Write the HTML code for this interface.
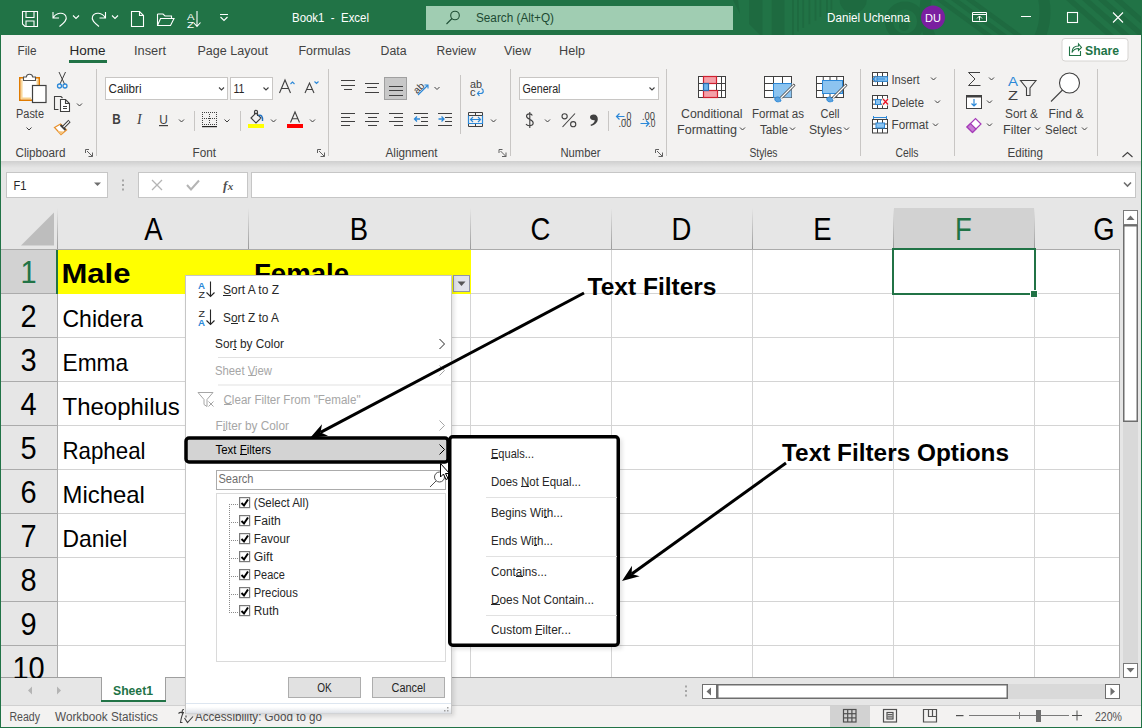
<!DOCTYPE html>
<html><head><meta charset="utf-8"><style>
html,body{margin:0;padding:0;width:1142px;height:728px;overflow:hidden;background:#E6E6E6}
svg{display:block;font-family:"Liberation Sans",sans-serif}
</style></head><body>
<svg width="1142" height="728" viewBox="0 0 1142 728">
<rect x="0" y="0" width="1142" height="728" fill="#E6E6E6" /><rect x="0" y="0" width="1142" height="35" fill="#217346" /><rect x="0" y="35" width="1142" height="126" fill="#F3F2F1" /><defs><linearGradient id="sh" x1="0" y1="0" x2="0" y2="1"><stop offset="0" stop-color="#CFCFCF"/><stop offset="1" stop-color="#E6E6E6"/></linearGradient><linearGradient id="vsep" x1="0" y1="0" x2="0" y2="1"><stop offset="0" stop-color="#E6E6E6"/><stop offset="1" stop-color="#9A9A9A"/></linearGradient><filter id="mshadow" x="-10%" y="-10%" width="130%" height="130%"><feGaussianBlur stdDeviation="2"/></filter></defs><rect x="0" y="161" width="1142" height="7" fill="url(#sh)" /><rect x="6.5" y="172.5" width="101" height="25" fill="#FFFFFF" stroke="#C6C6C6" stroke-width="1"/><text x="13.5" y="189.5" font-size="12.5" fill="#262626" textLength="13" lengthAdjust="spacingAndGlyphs" >F1</text><path d="M94,182.5 L101,182.5 L97.5,186 Z" stroke="none" fill="#6E6E6E" stroke-width="1" /><rect x="122" y="179.5" width="2" height="2" fill="#A6A6A6" /><rect x="122" y="184" width="2" height="2" fill="#A6A6A6" /><rect x="122" y="188.5" width="2" height="2" fill="#A6A6A6" /><rect x="138.5" y="172.5" width="109" height="25" fill="#FFFFFF" stroke="#C6C6C6" stroke-width="1"/><path d="M152,180 L162,190 M162,180 L152,190" stroke="#B4B4B4" fill="none" stroke-width="1.3" /><path d="M187,185 L191,189.5 L199,180.5" stroke="#B4B4B4" fill="none" stroke-width="2" /><text x="223" y="190" font-family="Liberation Serif" font-style="italic" font-weight="bold" font-size="13" fill="#505050">f<tspan font-size="11" dx="0.5">x</tspan></text><rect x="251.5" y="172.5" width="884" height="25" fill="#FFFFFF" stroke="#C6C6C6" stroke-width="1"/><path d="M1124,182.5 L1127.5,186 L1131,182.5" stroke="#6E6E6E" fill="none" stroke-width="1.6" /><rect x="893" y="208" width="141" height="41" fill="#D2D2D2" /><rect x="248" y="208" width="1" height="41" fill="url(#vsep)" /><rect x="470" y="208" width="1" height="41" fill="url(#vsep)" /><rect x="611" y="208" width="1" height="41" fill="url(#vsep)" /><rect x="752" y="208" width="1" height="41" fill="url(#vsep)" /><rect x="893" y="208" width="1" height="41" fill="url(#vsep)" /><rect x="1034" y="208" width="1" height="41" fill="url(#vsep)" /><rect x="57" y="208" width="1" height="41" fill="url(#vsep)" /><rect x="1" y="249" width="1119" height="1" fill="#ABABAB" /><path d="M54,212.5 L54,245.5 L21,245.5 Z" stroke="none" fill="#BDBDBD" stroke-width="1" /><text x="153.5" y="240" font-size="31" fill="#000000" textLength="18.34" lengthAdjust="spacingAndGlyphs" text-anchor="middle" >A</text><text x="359" y="240" font-size="31" fill="#000000" textLength="18.34" lengthAdjust="spacingAndGlyphs" text-anchor="middle" >B</text><text x="540.5" y="240" font-size="31" fill="#000000" textLength="19.86" lengthAdjust="spacingAndGlyphs" text-anchor="middle" >C</text><text x="681.5" y="240" font-size="31" fill="#000000" textLength="19.86" lengthAdjust="spacingAndGlyphs" text-anchor="middle" >D</text><text x="822.5" y="240" font-size="31" fill="#000000" textLength="18.34" lengthAdjust="spacingAndGlyphs" text-anchor="middle" >E</text><text x="963.5" y="240" font-size="31" fill="#217346" textLength="16.8" lengthAdjust="spacingAndGlyphs" text-anchor="middle" >F</text><text x="1104" y="240" font-size="31" fill="#000000" textLength="21.39" lengthAdjust="spacingAndGlyphs" text-anchor="middle" >G</text><rect x="58" y="250" width="1062" height="427" fill="#FFFFFF" /><rect x="1" y="250" width="56" height="44" fill="#D2D2D2" /><rect x="1" y="293" width="56" height="1" fill="#ABABAB" /><rect x="58" y="293" width="1062" height="1" fill="#D4D4D4" /><rect x="1" y="337" width="56" height="1" fill="#ABABAB" /><rect x="58" y="337" width="1062" height="1" fill="#D4D4D4" /><rect x="1" y="381" width="56" height="1" fill="#ABABAB" /><rect x="58" y="381" width="1062" height="1" fill="#D4D4D4" /><rect x="1" y="425" width="56" height="1" fill="#ABABAB" /><rect x="58" y="425" width="1062" height="1" fill="#D4D4D4" /><rect x="1" y="469" width="56" height="1" fill="#ABABAB" /><rect x="58" y="469" width="1062" height="1" fill="#D4D4D4" /><rect x="1" y="513" width="56" height="1" fill="#ABABAB" /><rect x="58" y="513" width="1062" height="1" fill="#D4D4D4" /><rect x="1" y="557" width="56" height="1" fill="#ABABAB" /><rect x="58" y="557" width="1062" height="1" fill="#D4D4D4" /><rect x="1" y="601" width="56" height="1" fill="#ABABAB" /><rect x="58" y="601" width="1062" height="1" fill="#D4D4D4" /><rect x="1" y="645" width="56" height="1" fill="#ABABAB" /><rect x="58" y="645" width="1062" height="1" fill="#D4D4D4" /><rect x="248" y="250" width="1" height="427" fill="#D4D4D4" /><rect x="470" y="250" width="1" height="427" fill="#D4D4D4" /><rect x="611" y="250" width="1" height="427" fill="#D4D4D4" /><rect x="752" y="250" width="1" height="427" fill="#D4D4D4" /><rect x="893" y="250" width="1" height="427" fill="#D4D4D4" /><rect x="1034" y="250" width="1" height="427" fill="#D4D4D4" /><rect x="57" y="250" width="1" height="427" fill="#ABABAB" /><rect x="56" y="250" width="2" height="44" fill="#217346" /><rect x="1119" y="250" width="1" height="428" fill="#ABABAB" /><rect x="1" y="677" width="1119" height="1" fill="#9F9F9F" /><text x="28.5" y="282.8" font-size="30.5" fill="#217346" textLength="16.12" lengthAdjust="spacingAndGlyphs" text-anchor="middle" >1</text><text x="28.5" y="326.8" font-size="30.5" fill="#000000" textLength="16.12" lengthAdjust="spacingAndGlyphs" text-anchor="middle" >2</text><text x="28.5" y="370.8" font-size="30.5" fill="#000000" textLength="16.12" lengthAdjust="spacingAndGlyphs" text-anchor="middle" >3</text><text x="28.5" y="414.8" font-size="30.5" fill="#000000" textLength="16.12" lengthAdjust="spacingAndGlyphs" text-anchor="middle" >4</text><text x="28.5" y="458.8" font-size="30.5" fill="#000000" textLength="16.12" lengthAdjust="spacingAndGlyphs" text-anchor="middle" >5</text><text x="28.5" y="502.8" font-size="30.5" fill="#000000" textLength="16.12" lengthAdjust="spacingAndGlyphs" text-anchor="middle" >6</text><text x="28.5" y="546.8" font-size="30.5" fill="#000000" textLength="16.12" lengthAdjust="spacingAndGlyphs" text-anchor="middle" >7</text><text x="28.5" y="590.8" font-size="30.5" fill="#000000" textLength="16.12" lengthAdjust="spacingAndGlyphs" text-anchor="middle" >8</text><text x="28.5" y="634.8" font-size="30.5" fill="#000000" textLength="16.12" lengthAdjust="spacingAndGlyphs" text-anchor="middle" >9</text><text x="28.5" y="678.8" font-size="30.5" fill="#000000" textLength="32.25" lengthAdjust="spacingAndGlyphs" text-anchor="middle" >10</text><rect x="58" y="250" width="413" height="44" fill="#FFFF00" /><text x="61.5" y="282.5" font-size="28" fill="#000000" font-weight="bold" textLength="69" lengthAdjust="spacingAndGlyphs" >Male</text><text x="254" y="282.5" font-size="28" fill="#000000" font-weight="bold" textLength="95" lengthAdjust="spacingAndGlyphs" >Female</text><text x="62.5" y="327" font-size="24" fill="#000000" textLength="80.5" lengthAdjust="spacingAndGlyphs" >Chidera</text><text x="62.5" y="371" font-size="24" fill="#000000" textLength="65.7" lengthAdjust="spacingAndGlyphs" >Emma</text><text x="62.5" y="415" font-size="24" fill="#000000" textLength="117.3" lengthAdjust="spacingAndGlyphs" >Theophilus</text><text x="62.5" y="459" font-size="24" fill="#000000" textLength="83" lengthAdjust="spacingAndGlyphs" >Rapheal</text><text x="62.5" y="503" font-size="24" fill="#000000" textLength="82.4" lengthAdjust="spacingAndGlyphs" >Micheal</text><text x="62.5" y="547" font-size="24" fill="#000000" textLength="64.8" lengthAdjust="spacingAndGlyphs" >Daniel</text><rect x="893" y="249" width="142" height="45" fill="none" stroke="#217346" stroke-width="2"/><rect x="1030" y="290" width="8" height="8" fill="#FFFFFF" /><rect x="1031" y="291" width="6" height="6" fill="#217346" /><rect x="453.5" y="275.5" width="16" height="16" fill="#E1E3EA" stroke="#9095A8" stroke-width="1"/><path d="M457.5,281.5 L465.5,281.5 L461.5,286 Z" stroke="none" fill="#555555" stroke-width="1" /><rect x="1120" y="208" width="21" height="470" fill="#E6E6E6" /><rect x="1123.5" y="210.5" width="14" height="14" fill="#FFFFFF" stroke="#7A7A7A" stroke-width="1"/><path d="M1126.5,220 L1134.5,220 L1130.5,215.5 Z" stroke="none" fill="#6E6E6E" stroke-width="1" /><rect x="1123" y="422" width="15" height="241" fill="#D9D9D9" /><rect x="1123.75" y="225.75" width="13.5" height="195.5" fill="#FFFFFF" stroke="#6E6E6E" stroke-width="1.5"/><rect x="1123.5" y="663.5" width="14" height="14" fill="#FFFFFF" stroke="#7A7A7A" stroke-width="1"/><path d="M1126.5,668 L1134.5,668 L1130.5,672.5 Z" stroke="none" fill="#6E6E6E" stroke-width="1" /><rect x="1" y="678" width="1140" height="27" fill="#E6E6E6" /><path d="M32,686.5 L32,694.5 L28,690.5 Z" stroke="none" fill="#B4B4B4" stroke-width="1" /><path d="M57,686.5 L57,694.5 L61,690.5 Z" stroke="none" fill="#B4B4B4" stroke-width="1" /><rect x="101" y="677" width="65" height="25" fill="#FFFFFF" /><rect x="101" y="677" width="1" height="25" fill="#9F9F9F" /><rect x="165" y="677" width="1" height="25" fill="#9F9F9F" /><rect x="101" y="700" width="65" height="2" fill="#217346" /><text x="113" y="695" font-size="13" fill="#217346" font-weight="bold" textLength="40" lengthAdjust="spacingAndGlyphs" >Sheet1</text><rect x="685" y="685.5" width="2" height="2" fill="#A6A6A6" /><rect x="685" y="690" width="2" height="2" fill="#A6A6A6" /><rect x="685" y="694.5" width="2" height="2" fill="#A6A6A6" /><rect x="702.5" y="684.5" width="14" height="14" fill="#FFFFFF" stroke="#6E6E6E" stroke-width="1"/><path d="M706.5,691.5 L711,687.5 L711,695.5 Z" stroke="none" fill="#6E6E6E" stroke-width="1" /><rect x="1007" y="684" width="98" height="15" fill="#D9D9D9" /><rect x="717.75" y="684.75" width="289.5" height="13.5" fill="#FFFFFF" stroke="#6E6E6E" stroke-width="1.5"/><rect x="1105.5" y="684.5" width="14" height="14" fill="#FFFFFF" stroke="#6E6E6E" stroke-width="1"/><path d="M1110.5,687.5 L1115,691.5 L1110.5,695.5 Z" stroke="none" fill="#6E6E6E" stroke-width="1" /><rect x="1" y="705" width="1140" height="1" fill="#D0D0D0" /><rect x="1" y="706" width="1140" height="21" fill="#F3F2F1" /><text x="9.5" y="720.5" font-size="12" fill="#505050" textLength="30.5" lengthAdjust="spacingAndGlyphs" >Ready</text><text x="55" y="720.5" font-size="12" fill="#505050" textLength="103" lengthAdjust="spacingAndGlyphs" >Workbook Statistics</text><text x="195" y="720.5" font-size="12" fill="#505050" textLength="127" lengthAdjust="spacingAndGlyphs" >Accessibility: Good to go</text><path d="M184,709.5 C181.5,709.5 181.5,713 184,712.5 M178.5,713.5 C180,712 182,712.5 183,713.5 C181.5,716 181,719 180.5,722.5 H182.5 M186,715.5 V717.5 M184.5,718 L187.5,722.5 L193,716.5" stroke="#404040" fill="none" stroke-width="1.1" /><rect x="830" y="706" width="40" height="21" fill="#D2D2D2" /><g stroke="#505050" stroke-width="1.2" fill="none"><rect x="843.5" y="709.5" width="12.5" height="12.5"/><line x1="843.5" y1="713.7" x2="856" y2="713.7"/><line x1="843.5" y1="717.9" x2="856" y2="717.9"/><line x1="847.7" y1="709.5" x2="847.7" y2="722"/><line x1="851.9" y1="709.5" x2="851.9" y2="722"/></g><g stroke="#505050" stroke-width="1.2" fill="none"><rect x="883.5" y="709.5" width="13" height="12.5"/><rect x="887" y="712.5" width="6" height="6.5"/><line x1="887.5" y1="714.7" x2="892.5" y2="714.7"/><line x1="887.5" y1="716.9" x2="892.5" y2="716.9"/></g><g stroke="#505050" stroke-width="1.2" fill="none"><path d="M923.5,709.5 H936.5 V722 H923.5 Z M928.5,709.5 V716.5 H936.5 M932.5,709.5 V716.5"/></g><rect x="956" y="715" width="7.5" height="1.2" fill="#505050" /><rect x="969" y="715" width="100" height="1" fill="#7A7A7A" /><rect x="1019" y="712" width="1" height="7" fill="#7A7A7A" /><rect x="1036" y="710" width="5" height="12" fill="#6E6E6E" /><rect x="1072" y="715" width="10" height="1" fill="#505050" /><rect x="1076.5" y="710.5" width="1" height="10" fill="#505050" /><text x="1095" y="720.5" font-size="12" fill="#505050" textLength="27" lengthAdjust="spacingAndGlyphs" >220%</text><!--RIBBON--><clipPath id="tclip"><rect x="0" y="0" width="1142" height="35"/></clipPath><g clip-path="url(#tclip)"><g fill="#1E6A40"><path d="M749,0 H762.5 V35 H760 L749,24 Z"/><rect x="771.7" y="0" width="12.8" height="35" fill="#1E6A40" /><rect x="792" y="0" width="1.8" height="35.0"/><rect x="797" y="0" width="1.8" height="31.4"/><rect x="802.3" y="0" width="1.8" height="27.8"/><rect x="808.5" y="0" width="1.8" height="24.2"/><rect x="814.6" y="0" width="1.8" height="20.6"/><rect x="819.5" y="0" width="1.8" height="17.0"/><rect x="826" y="0" width="1.8" height="13.4"/><rect x="830.5" y="0" width="1.8" height="9.8"/><path d="M839.7,0 A13.5,13 0 0 0 866.7,0 Z"/><path d="M733,0 H738 L740,14 Z"/></g><circle cx="905" cy="21.5" r="16" stroke="#1E6A40" stroke-width="8" fill="none"/><circle cx="904" cy="26" r="5" fill="#1E6A40"/><path d="M936,0 L944,0 L992,35 L984,35 Z" fill="#1E6A40"/><path d="M951,0 L959,0 L1007,35 L999,35 Z" fill="#1E6A40"/><path d="M966,0 L974,0 L1022,35 L1014,35 Z" fill="#1E6A40"/><circle cx="985" cy="12" r="60" stroke="#1E6A40" stroke-width="11" fill="none"/><path d="M1066,0 L1074,0 L1114,35 L1106,35 Z" fill="#1E6A40"/><path d="M1082,0 L1090,0 L1130,35 L1122,35 Z" fill="#1E6A40"/><path d="M1098,0 L1106,0 L1146,35 L1138,35 Z" fill="#1E6A40"/><path d="M1114,0 L1122,0 L1162,35 L1154,35 Z" fill="#1E6A40"/></g><path d="M22.5,11.5 H37.5 V26.5 H25 L22.5,24 Z M26,11.5 V17.5 H34 V11.5 M26,26.5 V21 H34 V26.5" stroke="#FFFFFF" fill="none" stroke-width="1.1" /><path d="M53,12 V18 H59 M53.5,17.5 C56,12.5 64,11.5 66,16.5 C67.5,20 64,23 59.5,26.5" stroke="#FFFFFF" fill="none" stroke-width="1.1" /><path d="M73,15.5 L76,18.5 L79,15.5" stroke="#FFFFFF" fill="none" stroke-width="1.1" /><path d="M105.5,12 V18 H99.5 M105,17.5 C102.5,12.5 94.5,11.5 92.5,16.5 C91,20 94.5,23 99,26.5" stroke="#FFFFFF" fill="none" stroke-width="1.1" /><path d="M112,15.5 L115,18.5 L118,15.5" stroke="#FFFFFF" fill="none" stroke-width="1.1" /><path d="M131.5,11.5 H139.5 L143.5,15.5 V26.5 H131.5 Z M139.5,11.5 V15.5 H143.5" stroke="#FFFFFF" fill="none" stroke-width="1.1" /><path d="M157.5,14 H163 L165,16 H171.5 V18.5 M157.5,14 V25.5 H170.5 L174,18.5 H160.5 L157.5,25.5" stroke="#FFFFFF" fill="none" stroke-width="1.1" /><text x="187" y="19.5" font-size="9.5" fill="#FFFFFF" textLength="7.5" lengthAdjust="spacingAndGlyphs" >A</text><text x="187" y="27.5" font-size="9.5" fill="#FFFFFF" textLength="7" lengthAdjust="spacingAndGlyphs" >Z</text><path d="M197,11 V26 M193.5,22.5 L197,26.5 L200.5,22.5" stroke="#FFFFFF" fill="none" stroke-width="1.1" /><path d="M220,14.5 H228 M220.5,17 L224,20.5 L227.5,17" stroke="#FFFFFF" fill="none" stroke-width="1.1" /><text x="292" y="22" font-size="12" fill="#FFFFFF" textLength="77" lengthAdjust="spacingAndGlyphs" >Book1  -  Excel</text><rect x="426" y="6" width="307" height="24" fill="#A0CDB2" /><circle cx="455" cy="15.5" r="4.3" stroke="#1E4D34" stroke-width="1.1" fill="none"/><path d="M452,18.5 L446.5,24" stroke="#1E4D34" fill="none" stroke-width="1.1" /><text x="476" y="22" font-size="12" fill="#1D4A32" textLength="78" lengthAdjust="spacingAndGlyphs" >Search (Alt+Q)</text><text x="827" y="22" font-size="12" fill="#FFFFFF" textLength="83" lengthAdjust="spacingAndGlyphs" >Daniel Uchenna</text><circle cx="933" cy="17.5" r="12" fill="#7A1FA0"/><text x="933" y="22" font-size="11" fill="#FFFFFF" text-anchor="middle" >DU</text><path d="M972.5,12.5 H986.5 V21.5 H972.5 Z M972.5,14.5 H986.5 M979.5,20.5 V16 M977,18.5 L979.5,16 L982,18.5" stroke="#FFFFFF" fill="none" stroke-width="1" /><rect x="1021" y="16" width="10" height="1" fill="#FFFFFF" /><rect x="1067.5" y="12.5" width="10" height="10" fill="none" stroke="#FFFFFF" stroke-width="1.1"/><path d="M1113,12.5 L1123,22.5 M1123,12.5 L1113,22.5" stroke="#FFFFFF" fill="none" stroke-width="1.1" /><text x="17.5" y="54.5" font-size="12.5" fill="#424242" textLength="19" lengthAdjust="spacingAndGlyphs" >File</text><text x="69.5" y="54.5" font-size="12.5" fill="#262626" textLength="36" lengthAdjust="spacingAndGlyphs" >Home</text><text x="134" y="54.5" font-size="12.5" fill="#424242" textLength="32" lengthAdjust="spacingAndGlyphs" >Insert</text><text x="197.5" y="54.5" font-size="12.5" fill="#424242" textLength="70.5" lengthAdjust="spacingAndGlyphs" >Page Layout</text><text x="298.5" y="54.5" font-size="12.5" fill="#424242" textLength="52" lengthAdjust="spacingAndGlyphs" >Formulas</text><text x="380.5" y="54.5" font-size="12.5" fill="#424242" textLength="26" lengthAdjust="spacingAndGlyphs" >Data</text><text x="436.5" y="54.5" font-size="12.5" fill="#424242" textLength="39.5" lengthAdjust="spacingAndGlyphs" >Review</text><text x="504" y="54.5" font-size="12.5" fill="#424242" textLength="27" lengthAdjust="spacingAndGlyphs" >View</text><text x="559" y="54.5" font-size="12.5" fill="#424242" textLength="26" lengthAdjust="spacingAndGlyphs" >Help</text><rect x="69" y="60" width="38" height="3" fill="#217346" /><rect x="1062" y="38.5" width="66" height="22.5" fill="#FFFFFF" rx="3" stroke="#D6D4D2" stroke-width="1"/><path d="M1069.5,46.5 V55.5 H1080.5 V51 M1072,52.5 C1072,47.5 1075,46 1078.5,46 V44 L1081.5,47.5 L1078.5,50.5 V48.5 C1076,48.5 1073.5,49.5 1072,52.5 Z" stroke="#217346" fill="none" stroke-width="1.1" /><text x="1085" y="55.2" font-size="13" fill="#217346" font-weight="bold" textLength="34" lengthAdjust="spacingAndGlyphs" >Share</text><rect x="96" y="69" width="1" height="87" fill="#C8C6C4" /><rect x="328" y="69" width="1" height="87" fill="#C8C6C4" /><rect x="510" y="69" width="1" height="87" fill="#C8C6C4" /><rect x="666" y="69" width="1" height="87" fill="#C8C6C4" /><rect x="860" y="69" width="1" height="87" fill="#C8C6C4" /><rect x="954" y="69" width="1" height="87" fill="#C8C6C4" /><rect x="1097" y="69" width="1" height="87" fill="#C8C6C4" /><rect x="194" y="111" width="1" height="20" fill="#C8C6C4" /><rect x="240" y="111" width="1" height="20" fill="#C8C6C4" /><rect x="460" y="75" width="1" height="59" fill="#C8C6C4" /><rect x="608" y="111" width="1" height="20" fill="#C8C6C4" /><text x="15.5" y="157" font-size="12.5" fill="#424242" textLength="50" lengthAdjust="spacingAndGlyphs" >Clipboard</text><text x="192.5" y="157" font-size="12.5" fill="#424242" textLength="23.5" lengthAdjust="spacingAndGlyphs" >Font</text><text x="385.5" y="157" font-size="12.5" fill="#424242" textLength="52" lengthAdjust="spacingAndGlyphs" >Alignment</text><text x="560.5" y="157" font-size="12.5" fill="#424242" textLength="40" lengthAdjust="spacingAndGlyphs" >Number</text><text x="749.5" y="157" font-size="12.5" fill="#424242" textLength="28" lengthAdjust="spacingAndGlyphs" >Styles</text><text x="895.5" y="157" font-size="12.5" fill="#424242" textLength="23" lengthAdjust="spacingAndGlyphs" >Cells</text><text x="1007.5" y="157" font-size="12.5" fill="#424242" textLength="35.5" lengthAdjust="spacingAndGlyphs" >Editing</text><path d="M85.5,149.5 H89 M85.5,149.5 V153 M87,151 L92.5,156.5 M92.5,152.5 V156.5 H88.5" stroke="#606060" fill="none" stroke-width="1" /><path d="M317.5,149.5 H321 M317.5,149.5 V153 M319,151 L324.5,156.5 M324.5,152.5 V156.5 H320.5" stroke="#606060" fill="none" stroke-width="1" /><path d="M499.0,149.5 H502.5 M499.0,149.5 V153 M500.5,151 L506.0,156.5 M506.0,152.5 V156.5 H502.0" stroke="#606060" fill="none" stroke-width="1" /><path d="M655.5,149.5 H659 M655.5,149.5 V153 M657,151 L662.5,156.5 M662.5,152.5 V156.5 H658.5" stroke="#606060" fill="none" stroke-width="1" /><rect x="19.8" y="77.8" width="19.4" height="22.4" fill="#FFFFFF" stroke="#E07B00" stroke-width="1.6"/><path d="M21.8,79.5 V98.3 H31 M37.3,79.5 V85" stroke="#F8D390" fill="none" stroke-width="1.4" /><path d="M23.5,80.5 H35.5 V77 H32.7 C32.2,73.3 26.8,73.3 26.3,77 H23.5 Z" stroke="#505050" fill="#FFFFFF" stroke-width="1.1" /><rect x="32.5" y="85.5" width="13.5" height="17" fill="#FFFFFF" stroke="#404040" stroke-width="1.2"/><text x="16" y="118" font-size="12.5" fill="#424242" textLength="28" lengthAdjust="spacingAndGlyphs" >Paste</text><path d="M26.5,127.5 L29,130 L31.5,127.5" stroke="#404040" fill="none" stroke-width="1" /><path d="M59,72 L64.5,84 M65.5,72 L60,84" stroke="#404040" fill="none" stroke-width="1" /><circle cx="59.5" cy="86" r="2" stroke="#2B88D8" stroke-width="1.3" fill="none"/><circle cx="65" cy="86" r="2" stroke="#2B88D8" stroke-width="1.3" fill="none"/><path d="M58.5,109.5 H54.5 V96.5 H61 L62.5,98" stroke="#404040" fill="none" stroke-width="1.1" /><path d="M60.5,99.5 H65.5 L69.5,103.5 V111.5 H60.5 Z M65.5,99.5 V103.5 H69.5 M63,106.5 H67 M63,108.5 H67" stroke="#404040" fill="#FFFFFF" stroke-width="1.1" /><path d="M77,103.5 L79.5,106 L82,103.5" stroke="#404040" fill="none" stroke-width="1" /><path d="M54.5,127.5 L60.5,124 L66.5,130 L61,134.5 Z" stroke="#E8912D" fill="#FFFFFF" stroke-width="1.3" /><path d="M57.5,131 L64,131.5 L61,134.5 Z" stroke="none" fill="#F5C27A" stroke-width="1" /><path d="M60.5,125 L65.5,130" stroke="#404040" fill="none" stroke-width="2" /><path d="M63,127.5 L69.5,121" stroke="#404040" fill="none" stroke-width="3.2" /><path d="M63.5,127 L69,121.5" stroke="#FFFFFF" fill="none" stroke-width="1.1" /><rect x="105.5" y="77.5" width="122" height="22" fill="#FFFFFF" stroke="#C8C6C4" stroke-width="1"/><text x="108.5" y="93" font-size="12.5" fill="#262626" textLength="33" lengthAdjust="spacingAndGlyphs" >Calibri</text><path d="M219,87.5 L221.5,90 L224,87.5" stroke="#404040" fill="none" stroke-width="1.1" /><rect x="230.5" y="77.5" width="42" height="22" fill="#FFFFFF" stroke="#C8C6C4" stroke-width="1"/><text x="233.5" y="93" font-size="12.5" fill="#262626" textLength="11" lengthAdjust="spacingAndGlyphs" >11</text><path d="M263.5,87.5 L266,90 L268.5,87.5" stroke="#404040" fill="none" stroke-width="1.1" /><path d="M279.5,93 L285,80 L290.5,93 M281.5,88.5 H288.5" stroke="#404040" fill="none" stroke-width="1.1" /><path d="M290.5,84 L292.5,82 L294.5,84" stroke="#2B88D8" fill="none" stroke-width="1.1" /><path d="M305,93 L309.5,83 L314,93 M306.7,89.5 H312.3" stroke="#404040" fill="none" stroke-width="1.1" /><path d="M314.5,81.5 L316.5,83.5 L318.5,81.5" stroke="#2B88D8" fill="none" stroke-width="1.1" /><text x="112.3" y="124" font-size="14" fill="#404040" font-weight="bold" textLength="8.5" lengthAdjust="spacingAndGlyphs" >B</text><text x="137" y="124" font-size="14" font-family="Liberation Serif" font-style="italic" fill="#404040">I</text><text x="159.3" y="123.8" font-size="13.5" fill="#404040" textLength="8.6" lengthAdjust="spacingAndGlyphs" >U</text><rect x="159" y="125" width="9" height="1.2" fill="#404040" /><path d="M179.0,119.5 L181.5,122 L184.0,119.5" stroke="#404040" fill="none" stroke-width="1" /><path d="M224.5,119.5 L227,122 L229.5,119.5" stroke="#404040" fill="none" stroke-width="1" /><path d="M271.0,119.5 L273.5,122 L276.0,119.5" stroke="#404040" fill="none" stroke-width="1" /><path d="M310.0,119.5 L312.5,122 L315.0,119.5" stroke="#404040" fill="none" stroke-width="1" /><g fill="#404040"><rect x="202" y="112" width="1" height="1"/><rect x="202" y="124" width="1" height="1"/><rect x="204" y="112" width="1" height="1"/><rect x="204" y="124" width="1" height="1"/><rect x="206" y="112" width="1" height="1"/><rect x="206" y="124" width="1" height="1"/><rect x="208" y="112" width="1" height="1"/><rect x="208" y="124" width="1" height="1"/><rect x="210" y="112" width="1" height="1"/><rect x="210" y="124" width="1" height="1"/><rect x="212" y="112" width="1" height="1"/><rect x="212" y="124" width="1" height="1"/><rect x="214" y="112" width="1" height="1"/><rect x="214" y="124" width="1" height="1"/><rect x="216" y="112" width="1" height="1"/><rect x="216" y="124" width="1" height="1"/><rect x="202" y="114" width="1" height="1"/><rect x="216" y="114" width="1" height="1"/><rect x="202" y="116" width="1" height="1"/><rect x="216" y="116" width="1" height="1"/><rect x="202" y="118" width="1" height="1"/><rect x="216" y="118" width="1" height="1"/><rect x="202" y="120" width="1" height="1"/><rect x="216" y="120" width="1" height="1"/><rect x="202" y="122" width="1" height="1"/><rect x="216" y="122" width="1" height="1"/><rect x="204" y="118" width="1" height="1"/><rect x="206" y="118" width="1" height="1"/><rect x="208" y="118" width="1" height="1"/><rect x="210" y="118" width="1" height="1"/><rect x="212" y="118" width="1" height="1"/><rect x="214" y="118" width="1" height="1"/><rect x="209" y="114" width="1" height="1"/><rect x="209" y="116" width="1" height="1"/><rect x="209" y="118" width="1" height="1"/><rect x="209" y="120" width="1" height="1"/><rect x="209" y="122" width="1" height="1"/></g><rect x="202" y="126" width="15" height="1.2" fill="#202020" /><path d="M251,118 L256,113 L261,118 L256,123 Z M254.5,114.5 V111.5 C254.5,110 257.5,110 257.5,111.5 V116" stroke="#404040" fill="none" stroke-width="1.1" /><path d="M258.5,115.5 C261,114.5 263,116 262.5,121" stroke="#1F6FC0" fill="none" stroke-width="1.4" /><rect x="248" y="124" width="16" height="4" fill="#FFFF00" /><path d="M290.5,122.5 L295,112 L299.5,122.5 M292.2,118.8 H297.8" stroke="#404040" fill="none" stroke-width="1.1" /><rect x="287" y="124" width="16" height="4" fill="#FF0000" /><rect x="341" y="80" width="14" height="1" fill="#404040" /><rect x="341" y="85" width="14" height="1" fill="#404040" /><rect x="344" y="89" width="8" height="1" fill="#404040" /><rect x="365" y="83" width="14" height="1" fill="#404040" /><rect x="367" y="87" width="10" height="1" fill="#404040" /><rect x="365" y="92" width="14" height="1" fill="#404040" /><rect x="384.5" y="77.5" width="22" height="22" fill="#C8C8C8" stroke="#A0A0A0" stroke-width="1"/><rect x="389" y="86" width="14" height="1" fill="#404040" /><rect x="389" y="90" width="14" height="1" fill="#404040" /><rect x="389" y="95" width="14" height="1" fill="#404040" /><text x="413" y="92" font-size="10" fill="#404040" textLength="11" lengthAdjust="spacingAndGlyphs" transform="rotate(-45 418 88)">ab</text><path d="M418,95 L428,85 M424.5,85 H428 V88.5" stroke="#2B88D8" fill="none" stroke-width="1.1" /><path d="M434.5,87 L437,89.5 L439.5,87" stroke="#404040" fill="none" stroke-width="1" /><text x="470" y="88" font-size="10" fill="#404040" textLength="12" lengthAdjust="spacingAndGlyphs" >ab</text><text x="470" y="95.5" font-size="10" fill="#404040" textLength="5.5" lengthAdjust="spacingAndGlyphs" >c</text><path d="M481.5,88.5 C484,90 484,93.5 480.5,93.5 H477.5 M479.5,91 L477.5,93.5 L479.5,96" stroke="#2B88D8" fill="none" stroke-width="1.2" /><rect x="341" y="113" width="14" height="1" fill="#404040" /><rect x="341" y="117" width="9" height="1" fill="#404040" /><rect x="341" y="121" width="14" height="1" fill="#404040" /><rect x="341" y="125" width="9" height="1" fill="#404040" /><rect x="365" y="113" width="14" height="1" fill="#404040" /><rect x="368" y="117" width="9" height="1" fill="#404040" /><rect x="365" y="121" width="14" height="1" fill="#404040" /><rect x="368" y="125" width="9" height="1" fill="#404040" /><rect x="389" y="113" width="14" height="1" fill="#404040" /><rect x="394" y="117" width="9" height="1" fill="#404040" /><rect x="389" y="121" width="14" height="1" fill="#404040" /><rect x="394" y="125" width="9" height="1" fill="#404040" /><rect x="414" y="113" width="14" height="1" fill="#404040" /><rect x="421" y="117" width="7" height="1" fill="#404040" /><rect x="421" y="121" width="7" height="1" fill="#404040" /><rect x="414" y="125" width="14" height="1" fill="#404040" /><path d="M420,119 H414.5 M417,116.5 L414.5,119 L417,121.5" stroke="#2B88D8" fill="none" stroke-width="1.3" /><rect x="438" y="113" width="14" height="1" fill="#404040" /><rect x="445" y="117" width="7" height="1" fill="#404040" /><rect x="445" y="121" width="7" height="1" fill="#404040" /><rect x="438" y="125" width="14" height="1" fill="#404040" /><path d="M438.5,119 H444 M441.5,116.5 L444,119 L441.5,121.5" stroke="#2B88D8" fill="none" stroke-width="1.3" /><path d="M468.5,112.5 H482.5 V126.5 H468.5 Z M468.5,115.5 H482.5 M468.5,123.5 H482.5 M475.5,112.5 V115.5 M475.5,123.5 V126.5" stroke="#404040" fill="none" stroke-width="1" /><path d="M468.5,115.5 V123.5 H482.5 V115.5" stroke="#2B88D8" fill="none" stroke-width="1.2" /><path d="M470.5,119.5 H480.5 M473,117 L470.5,119.5 L473,122 M478,117 L480.5,119.5 L478,122" stroke="#2B88D8" fill="none" stroke-width="1.2" /><path d="M491,119.5 L493.5,122 L496,119.5" stroke="#404040" fill="none" stroke-width="1" /><rect x="519.5" y="77.5" width="139" height="22" fill="#FFFFFF" stroke="#C8C6C4" stroke-width="1"/><text x="522.5" y="93" font-size="12.5" fill="#262626" textLength="38" lengthAdjust="spacingAndGlyphs" >General</text><path d="M649.5,87.5 L652,90 L654.5,87.5" stroke="#404040" fill="none" stroke-width="1.1" /><path d="M532.3,115.5 C531.5,113.3 526.8,113.3 526.5,116 C526.2,119.3 533.2,119.3 533.2,123 C533.2,126.2 527.5,126.5 526,124 M529.8,112 V128" stroke="#404040" fill="none" stroke-width="1.1" /><path d="M545,119.5 L547.5,122 L550,119.5" stroke="#404040" fill="none" stroke-width="1" /><circle cx="564.6" cy="116.3" r="2.6" stroke="#404040" stroke-width="1.1" fill="none"/><circle cx="573.2" cy="124.2" r="2.6" stroke="#404040" stroke-width="1.1" fill="none"/><path d="M575,113.5 L562.5,127" stroke="#404040" fill="none" stroke-width="1.1" /><path d="M593.5,114.5 C596.5,114.5 598,116.5 597.8,119.5 C597.5,122.5 595,125 591,126 L590.5,124.8 C593,124 594.5,122.3 594.8,120.3 C592.3,120.5 590,119.5 590,117.3 C590,115.5 591.5,114.5 593.5,114.5 Z" fill="#404040"/><path d="M616.5,116.5 H624.5 M619.5,113.5 L616.5,116.5 L619.5,119.5" stroke="#2B88D8" fill="none" stroke-width="1.2" /><text x="624" y="120.3" font-size="10.5" fill="#404040" textLength="7.3" lengthAdjust="spacingAndGlyphs" >.0</text><text x="618.5" y="127.3" font-size="10.5" fill="#404040" textLength="12.8" lengthAdjust="spacingAndGlyphs" >.00</text><text x="642" y="120.3" font-size="10.5" fill="#404040" textLength="13" lengthAdjust="spacingAndGlyphs" >.00</text><path d="M640.5,123.5 H649 M646,120.5 L649,123.5 L646,126.5" stroke="#2B88D8" fill="none" stroke-width="1.2" /><text x="648.5" y="127.3" font-size="10.5" fill="#404040" textLength="7" lengthAdjust="spacingAndGlyphs" >.0</text><g fill="none" stroke="#404040" stroke-width="1"><rect x="698.5" y="76.5" width="27" height="21" fill="#FFFFFF"/><path d="M703.5,76.5 V97.5 M716.5,76.5 V97.5 M721.5,76.5 V97.5 M698.5,83.5 H725.5 M698.5,90.5 H725.5"/></g><rect x="703.5" y="76.5" width="13" height="7" fill="#F4A0A8" stroke="#D02030" stroke-width="1.2"/><rect x="703.5" y="90.5" width="14" height="7" fill="#F4A0A8" stroke="#D02030" stroke-width="1.2"/><rect x="703.5" y="83.5" width="5" height="7" fill="#6CB4EC" stroke="#2B6CB0" stroke-width="1.2"/><text x="681" y="118" font-size="12.5" fill="#424242" textLength="61.5" lengthAdjust="spacingAndGlyphs" >Conditional</text><text x="677" y="133.5" font-size="12.5" fill="#424242" textLength="60" lengthAdjust="spacingAndGlyphs" >Formatting</text><path d="M740,127.5 L742.5,130 L745,127.5" stroke="#404040" fill="none" stroke-width="1" /><rect x="764.5" y="76.5" width="27" height="21" fill="#FFFFFF" stroke="#404040" stroke-width="1"/><line x1="773.5" y1="76.5" x2="773.5" y2="97.5" stroke="#404040" stroke-width="1"/><line x1="782.5" y1="76.5" x2="782.5" y2="97.5" stroke="#404040" stroke-width="1"/><line x1="764.5" y1="83.5" x2="791.5" y2="83.5" stroke="#404040" stroke-width="1"/><line x1="764.5" y1="90.5" x2="791.5" y2="90.5" stroke="#404040" stroke-width="1"/><rect x="773.5" y="83.5" width="18" height="14" fill="#8CC4F0" /><path d="M773.5,97.5 V83.5 H791.5" stroke="#2B88D8" fill="none" stroke-width="1" /><path d="M781,101 C777,103 774,101 775,98 C778,96 780,97 781,101 Z" stroke="#2B88D8" fill="#5BA3E0" stroke-width="1" /><path d="M780.5,97 L793,84.5 C794,83.5 795.5,85 794.5,86 L782,98.5" stroke="#404040" fill="#FFFFFF" stroke-width="1" /><text x="752" y="118" font-size="12.5" fill="#424242" textLength="52" lengthAdjust="spacingAndGlyphs" >Format as</text><text x="760" y="133.5" font-size="12.5" fill="#424242" textLength="28" lengthAdjust="spacingAndGlyphs" >Table</text><path d="M790,127.5 L792.5,130 L795,127.5" stroke="#404040" fill="none" stroke-width="1" /><rect x="816.5" y="76.5" width="27" height="21" fill="#FFFFFF" stroke="#404040" stroke-width="1"/><line x1="823.25" y1="76.5" x2="823.25" y2="97.5" stroke="#404040" stroke-width="1"/><line x1="830.0" y1="76.5" x2="830.0" y2="97.5" stroke="#404040" stroke-width="1"/><line x1="836.75" y1="76.5" x2="836.75" y2="97.5" stroke="#404040" stroke-width="1"/><line x1="816.5" y1="83.5" x2="843.5" y2="83.5" stroke="#404040" stroke-width="1"/><line x1="816.5" y1="90.5" x2="843.5" y2="90.5" stroke="#404040" stroke-width="1"/><rect x="822.5" y="80.5" width="20" height="13" fill="#8CC4F0" stroke="#2B88D8" stroke-width="1"/><path d="M833,101 C829,103 826,101 827,98 C830,96 832,97 833,101 Z" stroke="#2B88D8" fill="#5BA3E0" stroke-width="1" /><path d="M832.5,97 L845,84.5 C846,83.5 847.5,85 846.5,86 L834,98.5" stroke="#404040" fill="#FFFFFF" stroke-width="1" /><text x="820.5" y="118" font-size="12.5" fill="#424242" textLength="19" lengthAdjust="spacingAndGlyphs" >Cell</text><text x="809" y="133.5" font-size="12.5" fill="#424242" textLength="33" lengthAdjust="spacingAndGlyphs" >Styles</text><path d="M844,127.5 L846.5,130 L849,127.5" stroke="#404040" fill="none" stroke-width="1" /><rect x="872.5" y="72.5" width="15" height="13" fill="#FFFFFF" stroke="#404040" stroke-width="1"/><line x1="877.5" y1="72.5" x2="877.5" y2="85.5" stroke="#404040" stroke-width="1"/><line x1="882.5" y1="72.5" x2="882.5" y2="85.5" stroke="#404040" stroke-width="1"/><line x1="872.5" y1="76.83333333333333" x2="887.5" y2="76.83333333333333" stroke="#404040" stroke-width="1"/><line x1="872.5" y1="81.16666666666667" x2="887.5" y2="81.16666666666667" stroke="#404040" stroke-width="1"/><rect x="877" y="76.8" width="10.5" height="4.5" fill="#8CC4F0" stroke="#2B88D8" stroke-width="1"/><path d="M885,79 H873 M876,76 L873,79 L876,82" stroke="#2B88D8" fill="none" stroke-width="1.2" /><text x="891.5" y="83.5" font-size="12.5" fill="#424242" textLength="28" lengthAdjust="spacingAndGlyphs" >Insert</text><path d="M931,77.5 L933.5,80 L936,77.5" stroke="#404040" fill="none" stroke-width="1" /><rect x="872.5" y="95.5" width="15" height="13" fill="#FFFFFF" stroke="#404040" stroke-width="1"/><line x1="877.5" y1="95.5" x2="877.5" y2="108.5" stroke="#404040" stroke-width="1"/><line x1="882.5" y1="95.5" x2="882.5" y2="108.5" stroke="#404040" stroke-width="1"/><line x1="872.5" y1="99.83333333333333" x2="887.5" y2="99.83333333333333" stroke="#404040" stroke-width="1"/><line x1="872.5" y1="104.16666666666667" x2="887.5" y2="104.16666666666667" stroke="#404040" stroke-width="1"/><rect x="875.5" y="99.5" width="5" height="5" fill="#8CC4F0" stroke="#2B88D8" stroke-width="1"/><rect x="882" y="98.5" width="6.5" height="7" fill="#F3F2F1" /><path d="M883,99 L888,104.5 M888,99 L883,104.5" stroke="#E81123" fill="none" stroke-width="1.2" /><text x="891.5" y="106.5" font-size="12.5" fill="#424242" textLength="32.5" lengthAdjust="spacingAndGlyphs" >Delete</text><path d="M935,100.5 L937.5,103 L940,100.5" stroke="#404040" fill="none" stroke-width="1" /><rect x="872.5" y="119.5" width="15" height="13.5" fill="#FFFFFF" stroke="#404040" stroke-width="1"/><line x1="877.5" y1="119.5" x2="877.5" y2="133.0" stroke="#404040" stroke-width="1"/><line x1="882.5" y1="119.5" x2="882.5" y2="133.0" stroke="#404040" stroke-width="1"/><line x1="872.5" y1="124.0" x2="887.5" y2="124.0" stroke="#404040" stroke-width="1"/><line x1="872.5" y1="128.5" x2="887.5" y2="128.5" stroke="#404040" stroke-width="1"/><rect x="876" y="123" width="8.5" height="5" fill="#8CC4F0" stroke="#2B88D8" stroke-width="1"/><path d="M873,117.5 H887 M873.5,116 V119 M886.5,116 V119" stroke="#2B88D8" fill="none" stroke-width="1" /><text x="891.5" y="129.2" font-size="12.5" fill="#424242" textLength="37" lengthAdjust="spacingAndGlyphs" >Format</text><path d="M933,123.5 L935.5,126 L938,123.5" stroke="#404040" fill="none" stroke-width="1" /><path d="M980,72.5 H968.5 L975,79 L968.5,85.5 H980.5" stroke="#404040" fill="none" stroke-width="1" /><path d="M989,77.5 L991.5,80 L994,77.5" stroke="#404040" fill="none" stroke-width="1" /><rect x="966.5" y="95.5" width="15" height="13" fill="#FFFFFF" stroke="#404040" stroke-width="1"/><rect x="966.5" y="95.5" width="15" height="2" fill="#404040" /><path d="M974,99 V106 M971.5,103.5 L974,106 L976.5,103.5" stroke="#2B88D8" fill="none" stroke-width="1.2" /><path d="M987,100.5 L989.5,103 L992,100.5" stroke="#404040" fill="none" stroke-width="1" /><path d="M967,127 L975.5,118.5 L981,124 L972.5,132.5 Z" fill="#FFFFFF" stroke="#A53BB8" stroke-width="1.2"/><path d="M967,127 L970.5,123.5 L976,129 L972.5,132.5 Z" fill="#C77DD4" stroke="#A53BB8" stroke-width="1.2"/><path d="M987,123.5 L989.5,126 L992,123.5" stroke="#404040" fill="none" stroke-width="1" /><text x="1008" y="86" font-size="13" fill="#2B88D8" textLength="10" lengthAdjust="spacingAndGlyphs" >A</text><text x="1008" y="100" font-size="13" fill="#404040" textLength="10" lengthAdjust="spacingAndGlyphs" >Z</text><path d="M1020.5,80.5 H1036 L1030,88 V95.5 H1026.5 V88 Z" stroke="#404040" fill="none" stroke-width="1.1" /><text x="1005" y="118" font-size="12.5" fill="#424242" textLength="33" lengthAdjust="spacingAndGlyphs" >Sort &amp;</text><text x="1003" y="133.5" font-size="12.5" fill="#424242" textLength="28" lengthAdjust="spacingAndGlyphs" >Filter</text><path d="M1035,127.5 L1037.5,130 L1040,127.5" stroke="#404040" fill="none" stroke-width="1" /><circle cx="1069.5" cy="83" r="10" stroke="#404040" stroke-width="1.1" fill="#FFFFFF"/><path d="M1062.5,90 L1051,101.5" stroke="#404040" fill="none" stroke-width="1.1" /><text x="1048.5" y="118" font-size="12.5" fill="#424242" textLength="35" lengthAdjust="spacingAndGlyphs" >Find &amp;</text><text x="1045" y="133.5" font-size="12.5" fill="#424242" textLength="32" lengthAdjust="spacingAndGlyphs" >Select</text><path d="M1082,127.5 L1084.5,130 L1087,127.5" stroke="#404040" fill="none" stroke-width="1" /><path d="M1122.5,157 L1127.5,152.5 L1132.5,157" stroke="#404040" fill="none" stroke-width="1.1" /><rect x="187" y="277" width="267" height="439" fill="#000000" opacity="0.12" filter="url(#mshadow)"/><rect x="185.5" y="275.5" width="266" height="438" fill="#FFFFFF" stroke="#C6C6C6" stroke-width="1"/><text x="198" y="288.5" font-size="8.5" fill="#2B88D8" font-weight="bold" textLength="7" lengthAdjust="spacingAndGlyphs" >A</text><text x="198.5" y="297.5" font-size="8.5" fill="#262626" textLength="6.5" lengthAdjust="spacingAndGlyphs" >Z</text><path d="M210.5,281.5 V296.5 M206.5,292.5 L210.5,296.5 L214.5,292.5" stroke="#262626" fill="none" stroke-width="1.1" /><text x="198.5" y="316.5" font-size="8.5" fill="#262626" textLength="6.5" lengthAdjust="spacingAndGlyphs" >Z</text><text x="198" y="325.5" font-size="8.5" fill="#2B88D8" font-weight="bold" textLength="7" lengthAdjust="spacingAndGlyphs" >A</text><path d="M210.5,309.5 V324.5 M206.5,320.5 L210.5,324.5 L214.5,320.5" stroke="#262626" fill="none" stroke-width="1.1" /><text x="223" y="294" font-size="12.5" fill="#262626" textLength="56" lengthAdjust="spacingAndGlyphs" >Sort A to Z</text><rect x="223" y="295" width="8" height="1" fill="#262626" /><text x="223" y="322" font-size="12.5" fill="#262626" textLength="56" lengthAdjust="spacingAndGlyphs" >Sort Z to A</text><rect x="231" y="323" width="7" height="1" fill="#262626" /><text x="215" y="348" font-size="12.5" fill="#262626" textLength="69" lengthAdjust="spacingAndGlyphs" >Sort by Color</text><rect x="233" y="349" width="3" height="1" fill="#262626" /><path d="M439.5,339 L444.5,344 L439.5,349" stroke="#262626" fill="none" stroke-width="1" /><rect x="218" y="357" width="233" height="1" fill="#E1E1E1" /><text x="215" y="374.5" font-size="12.5" fill="#A6A6A6" textLength="57" lengthAdjust="spacingAndGlyphs" >Sheet View</text><rect x="248" y="375" width="8" height="1" fill="#A6A6A6" /><path d="M439.5,365.5 L444.5,370.5 L439.5,375.5" stroke="#A6A6A6" fill="none" stroke-width="1" /><rect x="218" y="384.5" width="233" height="1" fill="#E1E1E1" /><path d="M198,392.5 H213 L207,399.5 V406.5 L204,404.5 V399.5 Z" stroke="#A6A6A6" fill="none" stroke-width="1" /><path d="M208.5,401.5 L213.5,406.5 M213.5,401.5 L208.5,406.5" stroke="#A6A6A6" fill="none" stroke-width="1" /><text x="223.5" y="403.5" font-size="12.5" fill="#A6A6A6" textLength="137" lengthAdjust="spacingAndGlyphs" >Clear Filter From &quot;Female&quot;</text><rect x="224" y="404" width="8" height="1" fill="#A6A6A6" /><text x="215.5" y="429.5" font-size="12.5" fill="#A6A6A6" textLength="73.5" lengthAdjust="spacingAndGlyphs" >Filter by Color</text><rect x="223" y="430" width="3" height="1" fill="#A6A6A6" /><path d="M439.5,420.5 L444.5,425.5 L439.5,430.5" stroke="#A6A6A6" fill="none" stroke-width="1" /><rect x="186" y="438" width="262" height="24" rx="3" fill="#D3D3D3" stroke="#000000" stroke-width="3.5"/><text x="215.5" y="453.5" font-size="12.5" fill="#000000" textLength="55.5" lengthAdjust="spacingAndGlyphs" >Text Filters</text><rect x="240" y="454" width="7" height="1" fill="#000000" /><path d="M439.5,444.5 L444.5,449.5 L439.5,454.5" stroke="#000000" fill="none" stroke-width="1" /><rect x="216.5" y="470.5" width="229" height="19" fill="#FFFFFF" stroke="#ABABAB" stroke-width="1"/><text x="218.5" y="482.5" font-size="12" fill="#6D6D6D" textLength="35" lengthAdjust="spacingAndGlyphs" >Search</text><circle cx="439.5" cy="477" r="5" stroke="#505050" stroke-width="1" fill="none"/><path d="M436,481 L430,487" stroke="#505050" fill="none" stroke-width="1" /><rect x="216.5" y="493.5" width="229" height="168" fill="#FFFFFF" stroke="#DADADA" stroke-width="1"/><g fill="#8A8A8A"><rect x="229" y="504" width="1" height="1"/><rect x="229" y="506" width="1" height="1"/><rect x="229" y="508" width="1" height="1"/><rect x="229" y="510" width="1" height="1"/><rect x="229" y="512" width="1" height="1"/><rect x="229" y="514" width="1" height="1"/><rect x="229" y="516" width="1" height="1"/><rect x="229" y="518" width="1" height="1"/><rect x="229" y="520" width="1" height="1"/><rect x="229" y="522" width="1" height="1"/><rect x="229" y="524" width="1" height="1"/><rect x="229" y="526" width="1" height="1"/><rect x="229" y="528" width="1" height="1"/><rect x="229" y="530" width="1" height="1"/><rect x="229" y="532" width="1" height="1"/><rect x="229" y="534" width="1" height="1"/><rect x="229" y="536" width="1" height="1"/><rect x="229" y="538" width="1" height="1"/><rect x="229" y="540" width="1" height="1"/><rect x="229" y="542" width="1" height="1"/><rect x="229" y="544" width="1" height="1"/><rect x="229" y="546" width="1" height="1"/><rect x="229" y="548" width="1" height="1"/><rect x="229" y="550" width="1" height="1"/><rect x="229" y="552" width="1" height="1"/><rect x="229" y="554" width="1" height="1"/><rect x="229" y="556" width="1" height="1"/><rect x="229" y="558" width="1" height="1"/><rect x="229" y="560" width="1" height="1"/><rect x="229" y="562" width="1" height="1"/><rect x="229" y="564" width="1" height="1"/><rect x="229" y="566" width="1" height="1"/><rect x="229" y="568" width="1" height="1"/><rect x="229" y="570" width="1" height="1"/><rect x="229" y="572" width="1" height="1"/><rect x="229" y="574" width="1" height="1"/><rect x="229" y="576" width="1" height="1"/><rect x="229" y="578" width="1" height="1"/><rect x="229" y="580" width="1" height="1"/><rect x="229" y="582" width="1" height="1"/><rect x="229" y="584" width="1" height="1"/><rect x="229" y="586" width="1" height="1"/><rect x="229" y="588" width="1" height="1"/><rect x="229" y="590" width="1" height="1"/><rect x="229" y="592" width="1" height="1"/><rect x="229" y="594" width="1" height="1"/><rect x="229" y="596" width="1" height="1"/><rect x="229" y="598" width="1" height="1"/><rect x="229" y="600" width="1" height="1"/><rect x="229" y="602" width="1" height="1"/><rect x="229" y="604" width="1" height="1"/><rect x="229" y="606" width="1" height="1"/><rect x="229" y="608" width="1" height="1"/><rect x="229" y="610" width="1" height="1"/><rect x="229" y="612" width="1" height="1"/><rect x="231" y="504" width="1" height="1"/><rect x="233" y="504" width="1" height="1"/><rect x="235" y="504" width="1" height="1"/><rect x="237" y="504" width="1" height="1"/><rect x="231" y="522" width="1" height="1"/><rect x="233" y="522" width="1" height="1"/><rect x="235" y="522" width="1" height="1"/><rect x="237" y="522" width="1" height="1"/><rect x="231" y="540" width="1" height="1"/><rect x="233" y="540" width="1" height="1"/><rect x="235" y="540" width="1" height="1"/><rect x="237" y="540" width="1" height="1"/><rect x="231" y="558" width="1" height="1"/><rect x="233" y="558" width="1" height="1"/><rect x="235" y="558" width="1" height="1"/><rect x="237" y="558" width="1" height="1"/><rect x="231" y="576" width="1" height="1"/><rect x="233" y="576" width="1" height="1"/><rect x="235" y="576" width="1" height="1"/><rect x="237" y="576" width="1" height="1"/><rect x="231" y="594" width="1" height="1"/><rect x="233" y="594" width="1" height="1"/><rect x="235" y="594" width="1" height="1"/><rect x="237" y="594" width="1" height="1"/><rect x="231" y="612" width="1" height="1"/><rect x="233" y="612" width="1" height="1"/><rect x="235" y="612" width="1" height="1"/><rect x="237" y="612" width="1" height="1"/></g><rect x="239.6" y="497.6" width="10" height="10" fill="#FFFFFF" stroke="#7A7A7A" stroke-width="1.2"/><path d="M241.5,503 L244,505.5 L248,499.5" stroke="#000000" fill="none" stroke-width="2" /><text x="253.8" y="506.5" font-size="12.5" fill="#262626" textLength="55" lengthAdjust="spacingAndGlyphs" >(Select All)</text><rect x="239.6" y="515.6" width="10" height="10" fill="#FFFFFF" stroke="#7A7A7A" stroke-width="1.2"/><path d="M241.5,521 L244,523.5 L248,517.5" stroke="#000000" fill="none" stroke-width="2" /><text x="253.8" y="524.5" font-size="12.5" fill="#262626" textLength="27" lengthAdjust="spacingAndGlyphs" >Faith</text><rect x="239.6" y="533.6" width="10" height="10" fill="#FFFFFF" stroke="#7A7A7A" stroke-width="1.2"/><path d="M241.5,539 L244,541.5 L248,535.5" stroke="#000000" fill="none" stroke-width="2" /><text x="253.8" y="542.5" font-size="12.5" fill="#262626" textLength="36" lengthAdjust="spacingAndGlyphs" >Favour</text><rect x="239.6" y="551.6" width="10" height="10" fill="#FFFFFF" stroke="#7A7A7A" stroke-width="1.2"/><path d="M241.5,557 L244,559.5 L248,553.5" stroke="#000000" fill="none" stroke-width="2" /><text x="253.8" y="560.5" font-size="12.5" fill="#262626" textLength="19" lengthAdjust="spacingAndGlyphs" >Gift</text><rect x="239.6" y="569.6" width="10" height="10" fill="#FFFFFF" stroke="#7A7A7A" stroke-width="1.2"/><path d="M241.5,575 L244,577.5 L248,571.5" stroke="#000000" fill="none" stroke-width="2" /><text x="253.8" y="578.5" font-size="12.5" fill="#262626" textLength="31" lengthAdjust="spacingAndGlyphs" >Peace</text><rect x="239.6" y="587.6" width="10" height="10" fill="#FFFFFF" stroke="#7A7A7A" stroke-width="1.2"/><path d="M241.5,593 L244,595.5 L248,589.5" stroke="#000000" fill="none" stroke-width="2" /><text x="253.8" y="596.5" font-size="12.5" fill="#262626" textLength="44" lengthAdjust="spacingAndGlyphs" >Precious</text><rect x="239.6" y="605.6" width="10" height="10" fill="#FFFFFF" stroke="#7A7A7A" stroke-width="1.2"/><path d="M241.5,611 L244,613.5 L248,607.5" stroke="#000000" fill="none" stroke-width="2" /><text x="253.8" y="614.5" font-size="12.5" fill="#262626" textLength="25" lengthAdjust="spacingAndGlyphs" >Ruth</text><rect x="288.5" y="677.5" width="72" height="20" fill="#E1E1E1" stroke="#ADADAD" stroke-width="1"/><text x="324.5" y="692" font-size="12.5" fill="#262626" textLength="14.5" lengthAdjust="spacingAndGlyphs" text-anchor="middle" >OK</text><rect x="372.5" y="677.5" width="72" height="20" fill="#E1E1E1" stroke="#ADADAD" stroke-width="1"/><text x="408.5" y="692" font-size="12.5" fill="#262626" textLength="34" lengthAdjust="spacingAndGlyphs" text-anchor="middle" >Cancel</text><rect x="186" y="703" width="265" height="1" fill="#DDE6F0" /><linearGradient id="mbot" x1="0" y1="0" x2="0" y2="1"><stop offset="0" stop-color="#FFFFFF"/><stop offset="1" stop-color="#DCE0E6"/></linearGradient><rect x="186" y="707" width="265" height="6.5" fill="url(#mbot)" /><rect x="447" y="707" width="1.5" height="1.5" fill="#A0A0A0" /><rect x="444" y="710" width="1.5" height="1.5" fill="#A0A0A0" /><rect x="447" y="710" width="1.5" height="1.5" fill="#A0A0A0" /><rect x="452" y="439" width="170" height="210" fill="#000000" opacity="0.12" filter="url(#mshadow)"/><rect x="449.75" y="436.75" width="168.5" height="208.5" rx="3" fill="#FFFFFF" stroke="#000000" stroke-width="3.5"/><text x="491" y="457.8" font-size="12.5" fill="#262626" textLength="43" lengthAdjust="spacingAndGlyphs" >Equals...</text><rect x="491" y="458" width="7" height="1" fill="#262626" /><text x="491" y="485.8" font-size="12.5" fill="#262626" textLength="90" lengthAdjust="spacingAndGlyphs" >Does Not Equal...</text><rect x="521" y="486" width="8" height="1" fill="#262626" /><text x="491" y="516.8" font-size="12.5" fill="#262626" textLength="72" lengthAdjust="spacingAndGlyphs" >Begins With...</text><rect x="544" y="517" width="3" height="1" fill="#262626" /><text x="491" y="544.8" font-size="12.5" fill="#262626" textLength="62" lengthAdjust="spacingAndGlyphs" >Ends With...</text><rect x="534" y="545" width="3" height="1" fill="#262626" /><text x="491" y="575.8" font-size="12.5" fill="#262626" textLength="56" lengthAdjust="spacingAndGlyphs" >Contains...</text><rect x="516" y="576" width="7" height="1" fill="#262626" /><text x="491" y="603.8" font-size="12.5" fill="#262626" textLength="103" lengthAdjust="spacingAndGlyphs" >Does Not Contain...</text><rect x="491" y="604" width="9" height="1" fill="#262626" /><text x="491" y="633.8" font-size="12.5" fill="#262626" textLength="80" lengthAdjust="spacingAndGlyphs" >Custom Filter...</text><rect x="535" y="634" width="7" height="1" fill="#262626" /><rect x="486" y="497" width="131" height="1" fill="#E1E1E1" /><rect x="486" y="556" width="131" height="1" fill="#E1E1E1" /><rect x="486" y="615" width="131" height="1" fill="#E1E1E1" /><text x="587.5" y="295" font-size="23.5" fill="#000000" font-weight="bold" textLength="129" lengthAdjust="spacingAndGlyphs" >Text Filters</text><text x="782" y="460.5" font-size="23.5" fill="#000000" font-weight="bold" textLength="227" lengthAdjust="spacingAndGlyphs" >Text Filters Options</text><line x1="584" y1="293" x2="320.52" y2="432.43" stroke="#000000" stroke-width="3"/><path d="M310,438 L321.99,424.30 L320.52,432.43 L328.07,435.79 Z" fill="#000000"/><line x1="786" y1="463" x2="631.66" y2="574.05" stroke="#000000" stroke-width="3"/><path d="M622,581 L632.00,565.80 L631.66,574.05 L639.60,576.35 Z" fill="#000000"/><path d="M440.5,463.5 V477 L443.5,474 L446,479.5 L448,478.5 L445.5,473.5 L449.5,473.5 Z" stroke="#000000" fill="#FFFFFF" stroke-width="1" />
<rect x="0" y="0" width="1" height="728" fill="#217346"/>
<rect x="1141" y="0" width="1" height="728" fill="#217346"/>
<rect x="0" y="727" width="1142" height="1" fill="#217346"/>
</svg></body></html>
